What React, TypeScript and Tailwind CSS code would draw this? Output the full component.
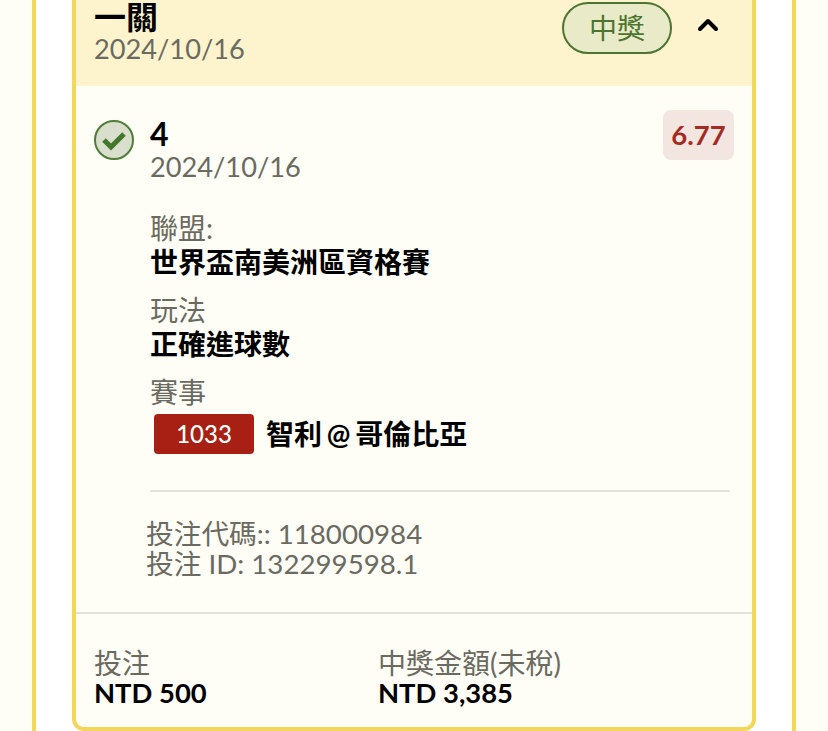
import { ChevronUp } from 'lucide-react'

const font = "font-['Lato','Noto_Sans_CJK_TC',sans-serif]"

const App = () => {
  return (
    <div className={`h-[731px] overflow-hidden bg-[#fefdf6] px-8 ${font}`}>
      <div className="h-full overflow-hidden border-x-4 border-[#f3d75c] bg-white px-9">
        <div className="-mt-2 flex flex-col rounded-b-xl border-x-4 border-b-4 border-[#f3d75c] bg-[#fefdf6]">
          {/* Header */}
          <div className="flex h-[94px] items-start justify-between bg-[#fdf3cd] pl-[18px] pr-[28px] pt-2">
            <div className="flex flex-col">
              <span className="text-[32px] leading-[34px] font-bold text-black">一關</span>
              <span className="text-[27.2px] leading-[30px] text-[#6b6a60]">2024/10/16</span>
            </div>
            <div className="mt-[2px] flex items-center gap-5">
              <span className="flex h-[52px] w-[110px] items-center justify-center rounded-full border-2 border-[#4d7431] bg-[#e9ebc8] text-[28px] text-[#4d7431]">
                中獎
              </span>
              <ChevronUp className="-mt-[6px] h-8 w-8 text-black" strokeWidth={3} />
            </div>
          </div>

          {/* Selection */}
          <div className="flex flex-col px-[18px] pt-6">
            <div className="flex items-start gap-[16px]">
              <svg className="mt-[10px] h-10 w-10 shrink-0" viewBox="0 0 40 40">
                <circle cx="20" cy="20" r="19" fill="#d9dfcc" stroke="#4d7d38" strokeWidth="2" />
                <path d="M10 20 L17 27 L30 14" fill="none" stroke="#41782c" strokeWidth="5" />
              </svg>
              <div className="flex flex-1 flex-col">
                <div className="flex items-start justify-between">
                  <div className="flex flex-col pt-1">
                    <span className="text-[32px] leading-[40px] font-bold text-black">4</span>
                    <span className="text-[27.2px] leading-[26px] text-[#6b6a60]">2024/10/16</span>
                  </div>
                  <span className="flex h-[50px] w-[71px] items-center justify-center rounded-lg bg-[#f3e6e0] text-[27.5px] font-bold text-[#a52a22]">
                    6.77
                  </span>
                </div>
                <div className="mt-[31px] flex flex-col gap-[14px]">
                  <div className="flex flex-col">
                    <span className="text-[28px] leading-[34px] text-[#6b6a60]">聯盟:</span>
                    <span className="text-[28px] leading-[34px] font-bold text-black">世界盃南美洲區資格賽</span>
                  </div>
                  <div className="flex flex-col">
                    <span className="text-[28px] leading-[34px] text-[#6b6a60]">玩法</span>
                    <span className="text-[28px] leading-[34px] font-bold text-black">正確進球數</span>
                  </div>
                  <div className="flex flex-col">
                    <span className="text-[28px] leading-[34px] text-[#6b6a60]">賽事</span>
                    <div className="mt-1 flex items-center gap-3 pl-1">
                      <span className="flex h-10 w-[100px] items-center justify-center rounded bg-[#a82014] text-[24px] font-medium text-white">
                        1033
                      </span>
                      <span className="text-[28px] font-bold text-black [word-spacing:-2px]">智利 @ 哥倫比亞</span>
                    </div>
                  </div>
                </div>
              </div>
            </div>
            <div className="mt-[35px] ml-[56px] mr-[4px] border-t-2 border-[#e4e3da]" />
            <div className="mt-[27px] ml-[52px] flex flex-col text-[27.7px] leading-[30px] text-[#6b6a60]">
              <span>投注代碼:: 118000984</span>
              <span>投注 ID: 132299598.1</span>
            </div>
          </div>

          {/* Footer */}
          <div className="mt-[33px] flex h-[115px] border-t-2 border-[#e4e3da] pl-[18px] pt-[35px]">
            <div className="flex w-[284px] flex-col">
              <span className="text-[28px] leading-[29px] text-[#6b6a60]">投注</span>
              <span className="text-[27.4px] leading-[29px] font-bold text-black">NTD 500</span>
            </div>
            <div className="flex flex-col">
              <span className="text-[28px] leading-[29px] text-[#6b6a60]">中獎金額(未稅)</span>
              <span className="text-[27.4px] leading-[29px] font-bold text-black">NTD 3,385</span>
            </div>
          </div>
        </div>
      </div>
    </div>
  )
}

export default App
